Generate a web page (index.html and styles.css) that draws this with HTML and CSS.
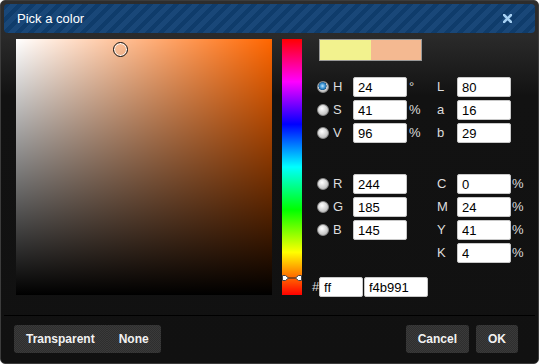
FILE: index.html
```html
<!DOCTYPE html>
<html lang="en">
<head>
  <meta charset="UTF-8">
  <title>Pick a color</title>
  <link rel="stylesheet" href="styles.css">
</head>
<body>

  <div class="dialog">
    <div class="titlebar">
      <span class="title">Pick a color</span>
      <svg class="close" width="9" height="9" viewBox="0 0 9 9">
        <path d="M1 1 L8 8 M8 1 L1 8" stroke="#a6d0f2" stroke-width="2.6" stroke-linecap="square"/>
      </svg>
    </div>

    <!-- Picker area -->
    <div class="picker">
      <div class="sv-map"><div class="sv-cursor"></div></div>
      <div class="hue-bar">
        <svg class="hue-marker" width="20" height="8" viewBox="0 0 20 8">
          <line x1="5" y1="4" x2="15" y2="4" stroke="#222" stroke-width="1"/>
          <path d="M0.5 1.5 H3.5 L6.5 4 L3.5 6.5 H0.5 Z" fill="#fff" stroke="#444" stroke-width="1"/>
          <path d="M19.5 1.5 H16.5 L13.5 4 L16.5 6.5 H19.5 Z" fill="#fff" stroke="#444" stroke-width="1"/>
        </svg>
      </div>

      <div class="fields">
        <div class="swatch">
          <span class="swatch-new"></span>
          <span class="swatch-old"></span>
        </div>

        <div class="field-grid">
          <input type="radio" name="mode" checked><label>H</label><input type="text" value="24"><span class="unit">°</span>
          <label>L</label><input type="text" value="80"><span class="unit-r"></span>

          <input type="radio" name="mode"><label>S</label><input type="text" value="41"><span class="unit">%</span>
          <label>a</label><input type="text" value="16"><span class="unit-r"></span>

          <input type="radio" name="mode"><label>V</label><input type="text" value="96"><span class="unit">%</span>
          <label>b</label><input type="text" value="29"><span class="unit-r"></span>
        </div>

        <div class="field-grid rgb">
          <input type="radio" name="mode"><label>R</label><input type="text" value="244"><span class="unit"></span>
          <label>C</label><input type="text" value="0"><span class="unit-r">%</span>

          <input type="radio" name="mode"><label>G</label><input type="text" value="185"><span class="unit"></span>
          <label>M</label><input type="text" value="24"><span class="unit-r">%</span>

          <input type="radio" name="mode"><label>B</label><input type="text" value="145"><span class="unit"></span>
          <label>Y</label><input type="text" value="41"><span class="unit-r">%</span>

          <span></span><span></span><span></span><span></span>
          <label>K</label><input type="text" value="4"><span class="unit-r">%</span>
        </div>

        <div class="hex-row">
          <span class="hash">#</span>
          <input type="text" class="hex-alpha" value="ff">
          <input type="text" class="hex-value" value="f4b991">
        </div>
      </div>
    </div>

    <div class="footer">
      <div class="btn-group">
        <button>Transparent</button>
        <button>None</button>
      </div>
      <div class="btn-right">
        <button>Cancel</button>
        <button>OK</button>
      </div>
    </div>
  </div>

</body>
</html>
```

FILE: styles.css
```css
* {
  margin: 0;
  padding: 0;
  box-sizing: border-box;
}

body {
  font-family: "Liberation Sans", Arial, sans-serif;
  font-size: 13px;
  background-color: #fff;
  width: 539px;
  height: 364px;
  overflow: hidden;
}

.dialog {
  width: 539px;
  height: 364px;
  padding: 3px;
  border: 1px solid #3c3c3c;
  border-radius: 5px;
  background: linear-gradient(#2d2d2d 0, #2a2a2a 36px, #121212 95px, #111 100%);
  display: flex;
  flex-direction: column;
}

/* Title bar */
.titlebar {
  height: 29px;
  border-radius: 4px;
  padding: 0 23px 0 13px;
  display: flex;
  align-items: center;
  justify-content: space-between;
  background: repeating-linear-gradient(135deg, #0f3c6b 0, #0f3c6b 4.6px, #194778 4.6px, #194778 9.2px);
}

.title {
  color: #fff;
  font-size: 13px;
}

.close {
  display: block;
}

/* Picker */
.picker {
  display: flex;
  padding: 6px 0 0 12px;
}

.sv-map {
  position: relative;
  width: 256px;
  height: 256px;
  background:
    linear-gradient(to top, #000, rgba(0, 0, 0, 0)),
    linear-gradient(to right, #fff, rgba(255, 255, 255, 0)),
    #ff6600;
}

.sv-cursor {
  position: absolute;
  left: 97px;
  top: 3px;
  width: 15px;
  height: 15px;
  border: 1px solid #111;
  border-radius: 50%;
  box-shadow: inset 0 0 0 1px #fff;
}

.hue-bar {
  position: relative;
  width: 20px;
  height: 256px;
  margin-left: 10px;
  background: linear-gradient(to bottom, #f00, #f0f 16.7%, #00f 33.3%, #0ff 50%, #0f0 66.7%, #ff0 83.3%, #f00);
}

.hue-marker {
  position: absolute;
  left: 0;
  top: 235px;
}

.fields {
  margin-left: 10px;
  color: #ddd;
}

.swatch {
  display: flex;
  width: 103px;
  height: 22px;
  margin-left: 7px;
  border: 1px solid #9a9a9a;
}

.swatch span {
  flex: 1;
}

.swatch-new {
  background-color: #f2f28e;
}

.swatch-old {
  background-color: #f4b991;
}

.field-grid {
  display: grid;
  grid-template-columns: 16px 20px 54px 30px 20px 54px 20px;
  grid-auto-rows: 20px;
  row-gap: 3px;
  padding-left: 5px;
  margin-top: 16px;
  line-height: 20px;
}

.field-grid.rgb {
  margin-top: 31px;
}

input[type="text"] {
  font-family: "Liberation Sans", Arial, sans-serif;
  font-size: 13px;
  color: #000;
  height: 20px;
  padding: 0 4px;
  background-color: #fff;
  border: 1px solid #c8c8c8;
  border-radius: 2px;
  outline: none;
}

input[type="radio"] {
  appearance: none;
  -webkit-appearance: none;
  width: 12px;
  height: 12px;
  margin-top: 4px;
  border-radius: 50%;
  border: 1px solid #8a8a8a;
  background: radial-gradient(circle at 40% 35%, #fff 0, #e2e2e2 35%, #a9a9a9 100%);
}

input[type="radio"]:checked {
  background:
    radial-gradient(circle at 45% 40%, #bfe6ff 0, #3b95d6 30%, #1c5d92 48%, transparent 52%),
    radial-gradient(circle at 40% 35%, #fff 0, #e2e2e2 35%, #a9a9a9 100%);
}

.unit {
  padding-left: 2px;
}

.unit-r {
  padding-left: 1px;
}

.hex-row {
  display: flex;
  align-items: center;
  margin-top: 14px;
  line-height: 20px;
}

.hash {
  width: 7px;
}

.hex-alpha {
  width: 44px;
}

.hex-value {
  width: 64px;
  margin-left: 1px;
}

/* Footer */
.footer {
  margin-top: 18px;
  border-top: 1px solid #000;
  padding: 9px 17px 0 10px;
  display: flex;
  justify-content: space-between;
}

.btn-group, .btn-right {
  display: flex;
}

.btn-right {
  gap: 7px;
}

button {
  height: 28px;
  padding: 0 12px;
  font-family: "Liberation Sans", Arial, sans-serif;
  font-size: 12px;
  font-weight: bold;
  color: #f2f2f2;
  border: none;
  border-radius: 3px;
  background: repeating-conic-gradient(#3a3a3a 0 25%, #2e2e2e 0 50%) 0 0 / 2px 2px;
  cursor: pointer;
}

.btn-group button {
  border-radius: 0;
}

.btn-group button:first-child {
  border-radius: 3px 0 0 3px;
}

.btn-group button:last-child {
  border-radius: 0 3px 3px 0;
}
```
